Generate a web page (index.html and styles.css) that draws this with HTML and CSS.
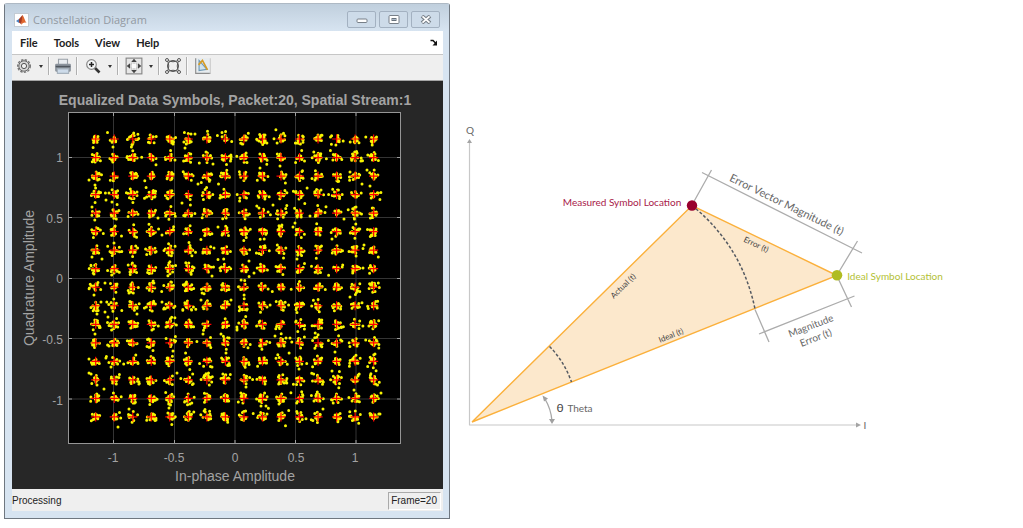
FILE: index.html
```html
<!DOCTYPE html>
<html lang="en">
<head>
<meta charset="utf-8">
<title>Constellation Diagram</title>
<link rel="stylesheet" href="styles.css">
</head>
<body>
<main class="page">
  <section class="window" aria-label="Constellation Diagram">
    <header class="titlebar">
      <svg class="logo" width="15" height="14" viewBox="0 0 15 14" aria-hidden="true">
        <rect x=".5" y=".5" width="14" height="13" fill="#fff" stroke="#c3cbd3"/>
        <path d="M2 8l3-2 2 2-2 2z" fill="#4a7fc0"/>
        <path d="M5 6l3.500-4 1 4-2.500 5-2-1.500z" fill="#a33a24"/>
        <path d="M8.500 2c1.500 2 2.500 6 4 8-2-1-3-.5-5.500 2z" fill="#e0662d"/>
      </svg>
      <h1 class="title">Constellation Diagram</h1>
      <div class="controls">
        <button class="control" aria-label="Minimize"><svg width="12" height="9" viewBox="0 0 12 9"><rect x="1" y="4" width="10" height="3.500" rx="1" fill="#fff" stroke="#777f88"/></svg></button>
        <button class="control" aria-label="Maximize"><svg width="12" height="9" viewBox="0 0 12 9"><rect x="1" y=".5" width="10" height="8" rx="1" fill="#fff" stroke="#777f88"/><rect x="4" y="3.500" width="4" height="2" fill="#a9b7c8" stroke="#68727c"/></svg></button>
        <button class="control" aria-label="Close"><svg width="12" height="9" viewBox="0 0 12 9"><path d="M2 1l8 7M10 1L2 8" stroke="#777f88" stroke-width="3.800"/><path d="M2.500 1.400l7 6.200M9.500 1.400l-7 6.200" stroke="#fff" stroke-width="1.800"/></svg></button>
      </div>
    </header>
    <nav class="menubar">
      <button class="menu">File</button>
      <button class="menu">Tools</button>
      <button class="menu">View</button>
      <button class="menu">Help</button>
      <button class="dock" aria-label="Dock"><svg width="8" height="7" viewBox="0 0 8 7"><path d="M.5 1.500h2.500l3 3" fill="none" stroke="#111" stroke-width="1.500"/><path d="M7 1.500v5H2.500z" fill="#111"/></svg></button>
    </nav>
    <div class="toolbar">
      <button class="tool wide" aria-label="Settings"><svg width="16" height="16" viewBox="0 0 16 16"><circle cx="8" cy="8" r="6.300" fill="none" stroke="#777" stroke-width="1.400" stroke-dasharray="2.400 1.300"/><circle cx="8" cy="8" r="5.200" fill="#d8d8d8" stroke="#666"/><circle cx="8" cy="8" r="2.600" fill="#f2f2f2" stroke="#555"/></svg></button>
      <button class="caret" aria-label="Settings options"></button>
      <span class="sep"></span>
      <button class="tool" aria-label="Print"><svg width="18" height="18" viewBox="0 0 16 16"><path d="M4 7V2h8v5" fill="#e9edf1" stroke="#9aa1a8"/><rect x="1" y="6" width="14" height="7" rx="1" fill="#8b939c"/><path d="M1.500 8.500h13" stroke="#4f565e" stroke-width="1.300"/><path d="M3 10.500h10v4H3z" fill="#cddbea" stroke="#a7b2bd"/></svg></button>
      <span class="sep"></span>
      <button class="tool wide" aria-label="Zoom in"><svg width="16" height="16" viewBox="0 0 16 16"><path d="M9.500 9.500l5 5" stroke="#333" stroke-width="2.600"/><circle cx="6.500" cy="6.500" r="4.800" fill="#f4f6f7" stroke="#888" stroke-width="1.200"/><path d="M6.500 4v5M4 6.500h5" stroke="#222" stroke-width="1.500"/></svg></button>
      <button class="caret" aria-label="Zoom options"></button>
      <span class="sep"></span>
      <button class="tool wide" aria-label="Fit to view"><svg width="18" height="18" viewBox="0 0 16 16"><rect x="1" y="1" width="14" height="14" fill="#e6e6e6" stroke="#858585"/><rect x="5.500" y="5.500" width="5" height="5" fill="#fafafa" stroke="#aaa" stroke-dasharray="1 1"/><path d="M8 1.500l2.500 3h-5zM8 14.500l2.500-3h-5zM1.500 8l3-2.500v5zM14.500 8l-3-2.500v5z" fill="#444"/></svg></button>
      <button class="caret" aria-label="Fit options"></button>
      <span class="sep"></span>
      <button class="tool" aria-label="Symbol trajectory"><svg width="18" height="18" viewBox="0 0 18 18" fill="none" stroke="#555"><path d="M3 3q6 3.500 12 0q-3.500 6 0 12q-6-3.500-12 0q3.500-6 0-12z"/><circle cx="9" cy="9" r="5.500"/><g fill="#eee"><circle cx="3" cy="3" r="1.500"/><circle cx="15" cy="3" r="1.500"/><circle cx="3" cy="15" r="1.500"/><circle cx="15" cy="15" r="1.500"/></g></svg></button>
      <span class="sep"></span>
      <button class="tool wide" aria-label="Measurements"><svg width="18" height="18" viewBox="0 0 16 16"><path d="M1 1h13v14H1z" fill="#e7ecef"/><path d="M1.500 1v13.500H15" fill="none" stroke="#8c8c8c"/><path d="M14.500 1v14" stroke="#ccc"/><path d="M4.500 12V3L11.500 11z" fill="#cfe3ef" stroke="#6f98b4"/><path d="M4 7l3.500-4L12 11.500" fill="none" stroke="#d69c24" stroke-width="1.500"/></svg></button>
    </div>
    <svg class="plot" viewBox="12 81 431 408" role="img" aria-label="Equalized data symbols">
      <rect x="68.500" y="112.500" width="332" height="331" fill="#000" stroke="#969696"/>
      <path class="grid" d="M113.500 113v330M174.500 113v330M235 113v330M295.500 113v330M356 113v330M69 157.500h331M69 217.500h331M69 278.500h331M69 338.500h331M69 399h331"/>
      <path class="ticks" d="M113.500 113v3m0 324v3M174.500 113v3m0 324v3M235 113v3m0 324v3M295.500 113v3m0 324v3M356 113v3m0 324v3M69 157.500h3m325 0h3M69 217.500h3m325 0h3M69 278.500h3m325 0h3M69 338.500h3m325 0h3M69 399h3m325 0h3"/>
      <path id="samples" class="samples"/>
      <path id="ideal" class="ideal"/>
      <text class="plot-title" x="235" y="105">Equalized Data Symbols, Packet:20, Spatial Stream:1</text>
      <g class="tick-x">
        <text x="113" y="462">-1</text><text x="174" y="462">-0.5</text><text x="235" y="462">0</text><text x="296" y="462">0.5</text><text x="355" y="462">1</text>
      </g>
      <g class="tick-y">
        <text x="63" y="162">1</text><text x="63" y="223">0.5</text><text x="63" y="283">0</text><text x="63" y="344">-0.5</text><text x="63" y="405">-1</text>
      </g>
      <text class="axis" x="235" y="481">In-phase Amplitude</text>
      <text class="axis" transform="translate(34 278) rotate(-90)">Quadrature Amplitude</text>
    </svg>
    <footer class="status">
      <span>Processing</span>
      <span class="frame">Frame=20</span>
    </footer>
  </section>

  <svg class="vector" viewBox="450 0 573 528" role="img" aria-label="Error vector magnitude diagram">
    <g class="axes">
      <path d="M469.500 143V425M469 425H858"/>
      <path class="head" d="M469.500 139l2.500 4h-5zM861 425l-5-2.500v5z"/>
    </g>
    <path class="dimension" d="M692 205l19.500-35M837 275l20.500-34M702 172.500L862 253M755 309.500L769 342M837 276l14.500 31M759 334l95.500-38"/>
    <path d="M472 422L692 205.500 837 275.500z" fill="#fce8cc" stroke="#fbb03b" stroke-width="1.400"/>
    <path class="arc" d="M692 205.500Q742 246 755 309"/>
    <path class="arc" d="M549.500 346.500Q564 361 571.500 382"/>
    <circle cx="692" cy="205.500" r="5.200" fill="#98002e"/>
    <circle cx="837" cy="275.300" r="5.300" fill="#b0bc22"/>
    <path d="M545 399Q551 409 552 421" fill="none" stroke="#a7a7a7" stroke-width="1.300"/>
    <path d="M542.500 395.500l5.500 3-4 3zM552 424l-3-5h6z" fill="#a0a0a0"/>
    <g class="label">
      <text x="470" y="134">Q</text>
      <text x="865" y="429">I</text>
      <text class="measured" x="622" y="206">Measured Symbol Location</text>
      <text class="ideal-label" x="895" y="280">Ideal Symbol Location</text>
      <text class="large" transform="translate(785 208) rotate(26)">Error Vector Magnitude (t)</text>
      <text transform="translate(812 329) rotate(-21)">Magnitude</text>
      <text transform="translate(817 341) rotate(-21)">Error (t)</text>
      <text class="theta" x="560" y="412">θ</text>
      <text x="580" y="412">Theta</text>
      <text class="small" transform="translate(755 247) rotate(25)">Error (t)</text>
      <text class="small" transform="translate(672 338) rotate(-22)">Ideal (t)</text>
      <text class="small" transform="translate(625 288) rotate(-44)">Actual (t)</text>
    </g>
  </svg>
</main>
<script src="plot.js"></script>
</body>
</html>
```

FILE: styles.css
```css
* { box-sizing: border-box; }

body { margin: 0; background: #fff; font-family: "Open Sans", "Noto Sans", sans-serif; }

button { padding: 0; border: 0; background: none; color: inherit; font: inherit; }

svg { display: block; }

.page { display: grid; grid-template-columns: minmax(0, 450fr) minmax(0, 573fr); align-items: start; }

.window {
  margin: 3px 0 0 4px;
  padding: 0 6px 7px 7px;
  border: 1px solid #6f7780;
  border-top-color: #aeb9c4;
  border-radius: 3px 3px 0 0;
  background: #d7e4f1;
}

.titlebar {
  display: flex;
  align-items: center;
  height: 27px;
  margin: 0 -6px 0 -7px;
  padding: 4px 9px 0 9px;
  background: linear-gradient(#c0cfdd, #d7e4f1);
}

.title { flex: 1; margin: 0 0 0 4px; color: #9299a1; font-size: 11px; font-weight: 400; line-height: 16px; }

.controls { display: flex; gap: 3px; }

.control {
  display: grid;
  place-items: center;
  width: 29px;
  height: 17px;
  border: 1px solid #a3b1c1;
  border-radius: 2px;
  background: #cddbe9;
}

.menubar { display: flex; align-items: center; gap: 16px; height: 23px; padding: 0 5px 0 8px; background: #fff; color: #222; font-family: Lato, sans-serif; font-size: 11px; font-weight: 700; }

.dock { margin-left: auto; }

.toolbar { display: flex; align-items: center; height: 27px; padding-bottom: 3px; border-top: 1px solid #c6c6c6; border-bottom: 1px solid #a5a5a5; background: #efefef; }

.tool { display: grid; place-items: center; width: 20px; height: 20px; }

.wide { width: 24px; }

.caret { display: grid; place-items: center; width: 9px; height: 20px; }

.caret::before { content: ""; border: 2px solid transparent; border-top: 3px solid #333; border-bottom: 0; }

.sep { width: 2px; height: 18px; margin: 0 3px; border-left: 1px solid #b0b0b0; background: #fafafa; }

.plot { width: 100%; background: #272727; font-family: "Liberation Sans", Arial, sans-serif; }

.plot text { fill: #a3a3a3; }

.grid { stroke: #343434; }

.ticks { stroke: #a0a0a0; }

.samples { fill: none; stroke: #f8f400; stroke-width: 3; stroke-linecap: round; }

.ideal { fill: none; stroke: #f00; stroke-width: 1.2; }

.plot .plot-title { font-size: 14px; font-weight: 700; text-anchor: middle; }

.tick-x { font-size: 12px; text-anchor: middle; }

.tick-y { font-size: 12px; text-anchor: end; }

.axis { font-size: 14px; text-anchor: middle; }

.status { display: flex; justify-content: space-between; align-items: center; height: 22px; padding: 2px 2px 1px 0; background: #efefef; color: #222; font-family: "Liberation Sans", Arial, sans-serif; font-size: 10px; }

.frame { padding: 2px 3px 3px 2px; border: 1px solid #fff; border-top-color: #aaa; border-left-color: #aaa; }

.vector { width: 100%; }

.axes { fill: none; stroke: #c8c8c8; stroke-width: 1.2; }

.axes .head { fill: #a4a4a4; stroke: none; }

.dimension { fill: none; stroke: #acacac; stroke-width: 1.3; }

.arc { fill: none; stroke: #555a62; stroke-width: 1.5; stroke-dasharray: 3 2; }

.label { fill: #666; font-family: Lato, sans-serif; font-size: 10px; text-anchor: middle; }

.measured { fill: #a82049; }

.ideal-label { fill: #b3bf35; }

.large { font-size: 11px; }

.theta { fill: #444; font-size: 12px; }

.small { fill: #444; font-size: 8px; }
```

FILE: plot.js
```js
// 256-QAM constellation: 16 x 16 reference points with noisy samples round each.
const SIZE = 16;
const PITCH = 18.53;
const LEFT = 95.7;
const TOP = 139;

let state = 2024;
function random() {
  state = (state + 0x6d2b79f5) | 0;
  let t = Math.imul(state ^ (state >>> 15), 1 | state);
  t = (t + Math.imul(t ^ (t >>> 7), 61 | t)) ^ t;
  return ((t ^ (t >>> 14)) >>> 0) / 4294967296;
}

function gaussian() {
  return Math.sqrt(-2 * Math.log(1 - random())) * Math.cos(2 * Math.PI * random());
}

const strays = [
  [113, 147], [185, 148], [89, 180], [95, 185], [92, 207], [106, 200], [112, 202], [182, 203],
  [114, 243], [102, 259], [92, 257], [162, 235], [158, 218], [198, 184], [213, 164], [218, 227],
  [214, 248], [212, 276], [195, 134], [260, 168], [273, 205], [259, 208], [249, 261], [362, 184],
  [370, 186], [367, 170], [350, 172], [356, 207], [344, 219], [310, 216], [293, 227], [295, 223],
  [364, 245], [363, 268], [332, 239], [297, 259], [254, 273], [280, 166], [94, 295], [129, 293],
  [97, 314], [105, 312], [137, 314], [108, 317], [162, 302], [173, 351], [177, 373], [212, 367],
  [203, 334], [226, 353], [89, 373], [104, 389], [118, 427], [190, 404], [201, 300], [231, 300],
  [237, 329], [95, 334], [111, 367], [129, 409], [169, 408], [221, 334], [350, 297], [237, 330],
  [275, 336], [290, 338], [315, 348], [335, 352], [375, 354], [299, 369], [332, 371], [246, 387],
  [354, 390], [381, 393], [380, 414], [261, 406], [266, 406], [279, 404], [323, 409], [286, 338]
];

let samples = "";
let ideal = "";
for (let row = 0; row < SIZE; row++) {
  for (let col = 0; col < SIZE; col++) {
    const x = LEFT + col * PITCH;
    const y = TOP + row * PITCH;
    ideal += `M${x - 4.5} ${y}h9M${x} ${y - 4.5}v9`;
    const count = 12 + Math.floor(random() * 6);
    for (let i = 0; i < count; i++) {
      const spread = random() < 0.14 ? 4.2 : 2.4;
      samples += `M${(x + gaussian() * spread).toFixed(1)} ${(y + gaussian() * spread).toFixed(1)}h0`;
    }
  }
}
for (const [x, y] of strays) samples += `M${x} ${y}h0`;

document.getElementById("samples").setAttribute("d", samples);
document.getElementById("ideal").setAttribute("d", ideal);
```
